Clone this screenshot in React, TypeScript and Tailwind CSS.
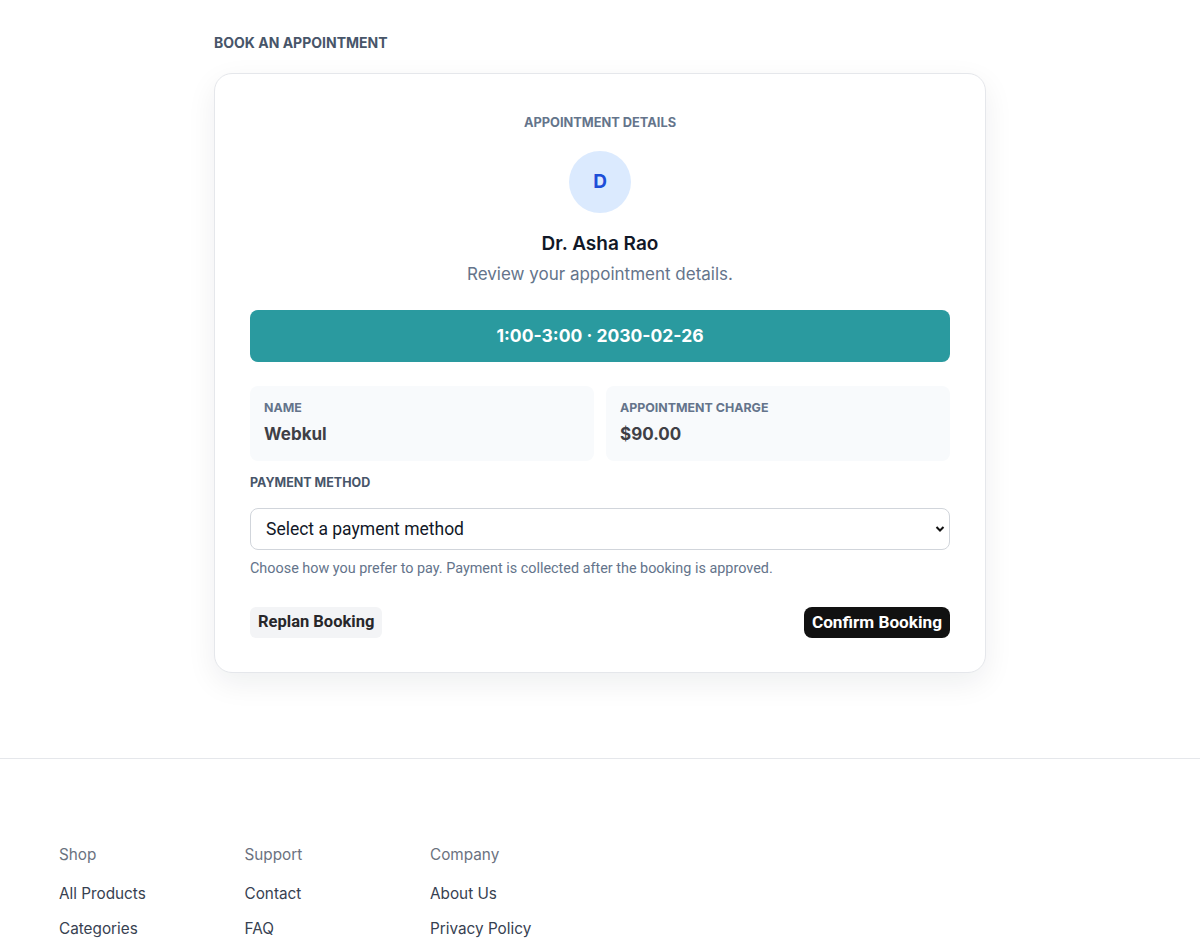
import React from "react"

const footerCols = [
  { title: "Shop", links: ["All Products", "Categories"] },
  { title: "Support", links: ["Contact", "FAQ"] },
  { title: "Company", links: ["About Us", "Privacy Policy"] },
]

function InfoBox({ label, value }: { label: string; value: string }) {
  return (
    <div className="rounded-lg bg-[#f8fafc] px-[14px] pt-[14px] pb-[15px]">
      <div className="text-[12.4px] font-bold leading-4 text-[#64748b]">{label}</div>
      <div className="mt-[6px] text-[17px] font-bold leading-6 text-[#3f3f46]">{value}</div>
    </div>
  )
}

export default function App() {
  return (
    <div className="min-h-screen bg-white font-['Inter','Noto_Sans',sans-serif]">
      <main className="mx-auto w-[772px] pt-[35px] pb-[85px]">
        <h1 className="text-[14px] font-bold leading-4 text-[#475569]">BOOK AN APPOINTMENT</h1>

        <div className="mt-[22px] rounded-[18px] border border-[#e5e7eb] bg-white px-[35px] pt-[41px] pb-[34px] shadow-[0_10px_30px_rgba(15,23,42,0.07)]">
          <div className="flex flex-col items-center">
            <div className="text-[12.8px] font-bold leading-4 text-[#64748b]">APPOINTMENT DETAILS</div>
            <div className="mt-[20px] flex h-[62px] w-[62px] items-center justify-center rounded-full bg-[#dbeafe] text-[19px] font-bold text-[#1d4ed8]">
              D
            </div>
            <div className="mt-[19px] text-[19px] font-semibold leading-6 text-[#111827]">Dr. Asha Rao</div>
            <div className="mt-[6px] text-[17px] leading-6 text-[#64748b]">Review your appointment details.</div>
          </div>

          <div className="mt-[24px] flex h-[52px] items-center justify-center rounded-lg bg-[#2a9a9f] text-[17.5px] font-bold text-white">
            1:00-3:00 · 2030-02-26
          </div>

          <div className="mt-[24px] grid grid-cols-2 gap-3">
            <InfoBox label="NAME" value="Webkul" />
            <InfoBox label="APPOINTMENT CHARGE" value="$90.00" />
          </div>

          <div className="mt-[14px] text-[12.5px] font-bold leading-4 text-[#475569]">PAYMENT METHOD</div>
          <div className="relative mt-[17px]">
            <select className="h-[42px] w-full appearance-none rounded-lg border border-[#d1d5db] bg-white px-[15px] font-['Roboto',sans-serif] text-[17.5px] text-[#111827]">
              <option>Select a payment method</option>
            </select>
            <svg
              className="pointer-events-none absolute right-[5px] top-[16px]"
              width="10"
              height="10"
              viewBox="0 0 10 10"
              fill="none"
              stroke="#111"
              strokeWidth="2"
            >
              <path d="M1.5 3l3.5 3.5L8.5 3" />
            </svg>
          </div>
          <p className="mt-[9px] font-['Roboto',sans-serif] text-[14.4px] leading-5 text-[#64748b]">
            Choose how you prefer to pay. Payment is collected after the booking is approved.
          </p>

          <div className="mt-[28px] flex items-center justify-between">
            <button className="h-[31px] rounded-md bg-[#f3f4f6] px-[8px] font-['Roboto',sans-serif] text-[16.5px] font-bold text-[#27272a]">
              Replan Booking
            </button>
            <button className="h-[31px] rounded-lg bg-[#111111] px-[8px] font-['Roboto',sans-serif] text-[17.2px] font-bold text-white">
              Confirm Booking
            </button>
          </div>
        </div>
      </main>

      <footer className="border-t border-[#e5e7eb]">
        <div className="flex px-[59px] pt-[86px]">
          {footerCols.map((col) => (
            <div key={col.title} className="w-[185.5px]">
              <div className="text-[15.3px] leading-5 text-[#6b7280]">{col.title}</div>
              <ul className="mt-[19px] flex flex-col gap-[15px]">
                {col.links.map((l) => (
                  <li key={l} className="text-[15.3px] leading-5 text-[#374151]">
                    {l}
                  </li>
                ))}
              </ul>
            </div>
          ))}
        </div>
      </footer>
    </div>
  )
}
